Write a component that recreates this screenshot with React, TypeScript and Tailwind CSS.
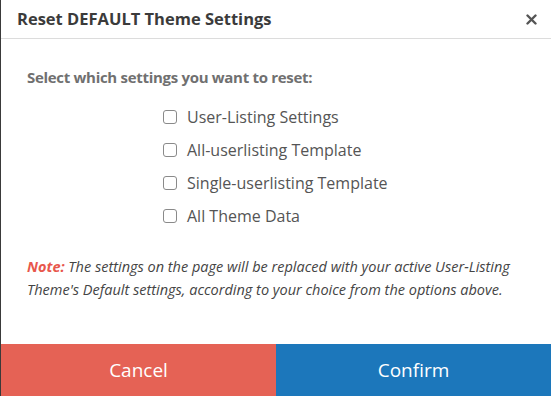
const options = [
  'User-Listing Settings',
  'All-userlisting Template',
  'Single-userlisting Template',
  'All Theme Data',
];

export default function App() {
  return (
    <div
      className="flex h-[396px] w-[551px] flex-col border-l border-[#3a3a3a] bg-white"
      style={{ fontFamily: '"Open Sans", "Noto Sans", sans-serif' }}
    >
      <div className="flex h-[39px] items-center justify-between border-b border-[#dcdcdc] pl-[16px] pr-[14px]">
        <h1 className="text-[16.5px] font-bold text-[#3b3b3b]">Reset DEFAULT Theme Settings</h1>
        <button className="text-[#555]">
          <svg width="11" height="11" viewBox="0 0 11 11">
            <path d="M1.5 1.5 L9.5 9.5 M9.5 1.5 L1.5 9.5" stroke="#555" strokeWidth="2.4" strokeLinecap="round" />
          </svg>
        </button>
      </div>

      <div className="flex flex-1 flex-col px-[26px] pt-[27px]">
        <p className="text-[15px] font-bold tracking-[-0.3px] text-[#707070]">Select which settings you want to reset:</p>

        <div className="mt-[18px] flex flex-col gap-[12px] pl-[136px]">
          {options.map((o) => (
            <label key={o} className="flex h-[21px] items-center gap-[10px] text-[16px] text-[#555]">
              <span className="h-[14px] w-[14px] rounded-[3px] border border-[#8a8a8a] bg-white" />
              {o}
            </label>
          ))}
        </div>

        <p className="mt-[28px] text-[14.5px] italic leading-[23px] text-[#444]">
          <span className="font-bold text-[#e8574c]">Note:</span> The settings on the page will be replaced with your
          active User-Listing Theme's Default settings, according to your choice from the options above.
        </p>
      </div>

      <div className="flex h-[52px]">
        <button className="w-[275px] bg-[#e56255] text-[19px] text-white">Cancel</button>
        <button className="flex-1 bg-[#1c77bb] text-[19px] text-white">Confirm</button>
      </div>
    </div>
  );
}
